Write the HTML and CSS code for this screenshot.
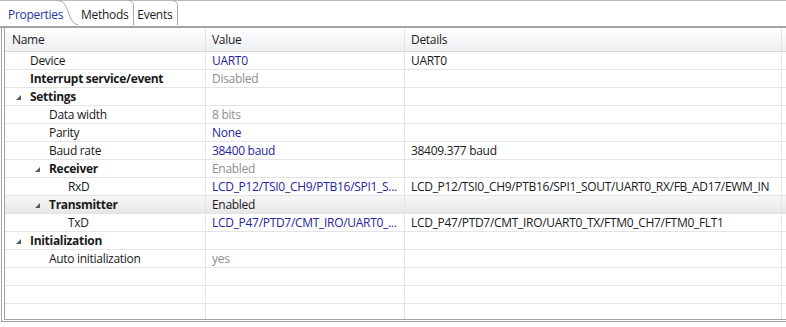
FILE: index.html
```html
<!DOCTYPE html>
<html lang="en">
<head>
  <meta charset="UTF-8">
  <title>Component Inspector - UART0</title>
  <link rel="stylesheet" href="styles.css">
</head>
<body>
  <div class="tabs">
    <span class="tab active">Properties</span>
    <svg class="tab-edge wide" width="22" height="25" viewBox="0 0 22 25"><path d="M0 0.5 C7 0.5 9 3 12 11.5 C15 20 17 24.5 22 24.5" /></svg>
    <span class="tab">Methods</span>
    <svg class="tab-edge" width="6" height="25" viewBox="0 0 6 25"><path d="M0 0.5 C3 0.5 5.5 2 5.5 6 L5.5 25" /></svg>
    <span class="tab">Events</span>
    <svg class="tab-edge" width="6" height="25" viewBox="0 0 6 25"><path d="M0 0.5 C3 0.5 5.5 2 5.5 6 L5.5 25" /></svg>
  </div>

  <div class="grid-frame">
    <div class="row head">
      <div class="cell name">Name</div>
      <div class="cell value">Value</div>
      <div class="cell details">Details</div>
      <div class="cell filler"></div>
    </div>

    <div class="row">
      <div class="cell name lvl0">Device</div>
      <div class="cell value link">UART0</div>
      <div class="cell details">UART0</div>
      <div class="cell filler"></div>
    </div>
    <div class="row">
      <div class="cell name lvl0 bold">Interrupt service/event</div>
      <div class="cell value muted">Disabled</div>
      <div class="cell details"></div>
      <div class="cell filler"></div>
    </div>
    <div class="row">
      <div class="cell name lvl0 bold"><i class="twisty"></i>Settings</div>
      <div class="cell value"></div>
      <div class="cell details"></div>
      <div class="cell filler"></div>
    </div>
    <div class="row">
      <div class="cell name lvl1">Data width</div>
      <div class="cell value muted">8 bits</div>
      <div class="cell details"></div>
      <div class="cell filler"></div>
    </div>
    <div class="row">
      <div class="cell name lvl1">Parity</div>
      <div class="cell value link">None</div>
      <div class="cell details"></div>
      <div class="cell filler"></div>
    </div>
    <div class="row">
      <div class="cell name lvl1">Baud rate</div>
      <div class="cell value link">38400 baud</div>
      <div class="cell details">38409.377 baud</div>
      <div class="cell filler"></div>
    </div>
    <div class="row">
      <div class="cell name lvl1 bold"><i class="twisty"></i>Receiver</div>
      <div class="cell value muted">Enabled</div>
      <div class="cell details"></div>
      <div class="cell filler"></div>
    </div>
    <div class="row">
      <div class="cell name lvl2">RxD</div>
      <div class="cell value link">LCD_P12/TSI0_CH9/PTB16/SPI1_S...</div>
      <div class="cell details">LCD_P12/TSI0_CH9/PTB16/SPI1_SOUT/UART0_RX/FB_AD17/EWM_IN</div>
      <div class="cell filler"></div>
    </div>
    <div class="row selected">
      <div class="cell name lvl1 bold"><i class="twisty"></i>Transmitter</div>
      <div class="cell value">Enabled</div>
      <div class="cell details"></div>
      <div class="cell filler"></div>
    </div>
    <div class="row">
      <div class="cell name lvl2">TxD</div>
      <div class="cell value link">LCD_P47/PTD7/CMT_IRO/UART0_...</div>
      <div class="cell details">LCD_P47/PTD7/CMT_IRO/UART0_TX/FTM0_CH7/FTM0_FLT1</div>
      <div class="cell filler"></div>
    </div>
    <div class="row">
      <div class="cell name lvl0 bold"><i class="twisty"></i>Initialization</div>
      <div class="cell value"></div>
      <div class="cell details"></div>
      <div class="cell filler"></div>
    </div>
    <div class="row">
      <div class="cell name lvl1">Auto initialization</div>
      <div class="cell value muted">yes</div>
      <div class="cell details"></div>
      <div class="cell filler"></div>
    </div>
    <div class="row"><div class="cell name"></div><div class="cell value"></div><div class="cell details"></div><div class="cell filler"></div></div>
    <div class="row"><div class="cell name"></div><div class="cell value"></div><div class="cell details"></div><div class="cell filler"></div></div>
    <div class="row"><div class="cell name"></div><div class="cell value"></div><div class="cell details"></div><div class="cell filler"></div></div>
  </div>
</body>
</html>
```
FILE: styles.css
```css
body {
  margin: 0;
  width: 786px;
  font-family: "Open Sans", "Noto Sans", sans-serif;
  font-size: 12px;
  letter-spacing: -0.3px;
  color: #1a1a1a;
  background: #fff;
}

/* tab strip */
.tabs {
  display: flex;
  align-items: stretch;
  height: 25px;
  border-top: 1px solid #b9b9b9;
  border-bottom: 2px solid #a3a3a3;
}

.tab {
  display: flex;
  align-items: center;
  padding: 2px 0 0 3px;
  line-height: 1;
}

.tab.active {
  color: #23349a;
  padding-left: 8px;
  width: 50px;
}

.tab-edge {
  flex: none;
  margin-top: -1px;
}

.tab-edge.wide {
  margin-left: -2px;
}

.tab-edge path {
  fill: none;
  stroke: #a8a8a8;
  stroke-width: 1;
}

/* property grid */
.grid-frame {
  margin-left: 1px;
  height: 291px;
  overflow: hidden;
  border-left: 4px double #a2a2a2;
  border-bottom: 3px double #a2a2a2;
}

.row {
  display: grid;
  grid-template-columns: 201px 199px 377px 1fr;
  height: 18px;
}

.cell {
  border-right: 1px solid #e4e4e4;
  border-bottom: 1px solid #e4e4e4;
  padding-left: 6px;
  white-space: nowrap;
  overflow: hidden;
  line-height: 17px;
}

.cell.filler {
  border-right: none;
  padding: 0;
}

.row.head {
  height: 24px;
  background: linear-gradient(#ffffff, #f3f4f6 60%, #eef0f2);
}

.row.head .cell {
  line-height: 23px;
  border-bottom-color: #d6d6d6;
}

.row.head .name {
  padding-left: 7px;
}

.row.selected {
  background: linear-gradient(#f7f7f7, #e6e6e6);
}

.name.lvl0 { padding-left: 25px; }
.name.lvl1 { padding-left: 44px; }
.name.lvl2 { padding-left: 63px; }

.bold {
  font-weight: 700;
}

.link {
  color: #26269a;
}

.muted {
  color: #8e8e8e;
}

.twisty {
  display: inline-block;
  width: 0;
  height: 0;
  margin: 0 9px 1px -14px;
  border-style: solid;
  border-width: 0 0 5px 5px;
  border-color: transparent transparent #5a5a5a transparent;
}
```
